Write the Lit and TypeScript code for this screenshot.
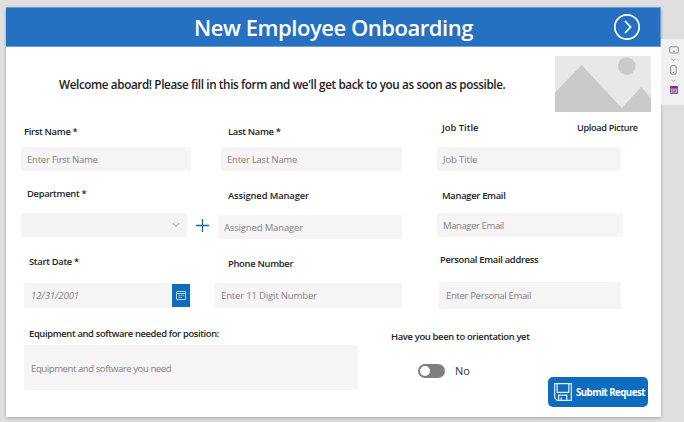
import { LitElement, html, css, svg } from "lit";
import { customElement, property } from "lit/decorators.js";

@customElement("form-field")
class FormField extends LitElement {
  @property() label = "";
  @property() placeholder = "";
  @property() kind = "text";

  static styles = css`
    :host { display: flex; flex-direction: column; align-items: flex-start; }
    .label {
      height: 14px; line-height: 14px; white-space: nowrap;
      font-size: 9.4px; font-weight: 600; color: #242424;
      letter-spacing: var(--label-track, -0.3px);
      margin-left: var(--label-x, 8px);
    }
    .row { display: flex; align-items: center; margin-top: var(--gap, 8px); }
    .box {
      box-sizing: border-box; display: flex; align-items: center; justify-content: space-between;
      width: var(--w, 184px); height: var(--h, 24px);
      padding: 0 7px 0 var(--pad, 6px);
      border-radius: var(--radius, 2px);
      background: #f6f4f5; color: #848282;
      font-size: 9.6px; line-height: 14px; white-space: nowrap;
      letter-spacing: var(--track, -0.27px);
    }
    .box > span { padding-top: var(--drop, 1px); }
    .date { padding-right: 1px; font-style: italic; border-radius: 0; }
    .select { background: #f4f4f4; }
    .button { display: flex; align-items: center; justify-content: center; width: 18px; height: 23px; background: #0f6cbd; }
    .plus { margin-left: 8px; }
    svg { display: block; fill: none; }
  `;

  render() {
    return html`
      <div class="label">${this.label}</div>
      <div class="row">
        <div class="box ${this.kind}">
          <span>${this.placeholder}</span>
          ${this.kind === "select"
            ? html`<svg width="8" height="6" viewBox="0 0 8 6" stroke="#8a8a8a" stroke-width="0.9"><path d="M.7 1 4 4.4 7.3 1" /></svg>`
            : ""}
          ${this.kind === "date"
            ? html`<div class="button">
                <svg width="10" height="9" viewBox="0 0 10 9" stroke="#c4dbf0" stroke-width="0.9">
                  <path d="M.5.5h9v8h-9zM.5 2.5h9" />
                  <path d="M2.5 4.3h1.2M4.6 4.3h1.2M6.7 4.3h1.2M2.5 6.4h1.2M4.6 6.4h1.2" stroke-width="1.1" />
                </svg>
              </div>`
            : ""}
        </div>
        ${this.kind === "select"
          ? html`<svg class="plus" width="15" height="15" viewBox="0 0 15 15" stroke="#1f649c" stroke-width="1.3"><path d="M7.5 1v13M1 7.5h13" /></svg>`
          : ""}
      </div>
    `;
  }
}

const photo = svg`
  <rect width="96" height="56" fill="#e8e8e8" />
  <circle cx="71.8" cy="10" r="8.8" fill="#cacac9" />
  <path d="M0 36.5 26.6 9 66.8 52 86.3 31 96 42.5V56H0z" fill="#cacac9" />
`;

@customElement("app-root")
class AppRoot extends LitElement {
  static styles = css`
    :host {
      display: flex; align-items: flex-start; box-sizing: border-box;
      width: 684px; height: 422px; padding: 7px 0 0 6px; overflow: hidden;
      background: #dfdfdf;
      font-family: "Open Sans", "Noto Sans", sans-serif;
    }
    svg { display: block; fill: none; flex: none; }
    .card {
      flex: none; width: 655px; height: 410px; background: #fff;
      box-shadow: 0 1px 3px rgba(0, 0, 0, 0.28);
      display: flex; flex-direction: column;
    }
    header {
      box-sizing: border-box; height: 40px; flex: none; background: #2670c2;
      border: 1px solid #6f9fd4; border-left-width: 0;
      display: flex; align-items: center; justify-content: space-between;
      padding: 0 19px 0 188px; color: #fff;
    }
    .title { font-size: 22px; line-height: 38px; font-weight: 600; white-space: nowrap; letter-spacing: -0.46px; padding-bottom: 1px; }
    .intro { display: flex; flex: none; height: 66px; padding: 9px 10px 0 53px; box-sizing: border-box; justify-content: space-between; }
    .welcome { margin-top: 19px; line-height: 18px; font-size: 11.7px; font-weight: 600; color: #222; white-space: nowrap; letter-spacing: -0.38px; }
    .columns { display: flex; flex: none; height: 209px; }
    .first { width: 208px; padding: 12px 0 0 15px; box-sizing: border-box; }
    .second { width: 216px; padding: 12px 0 0; box-sizing: border-box; }
    .third { flex: 1; padding: 8px 0 0; }
    .side-by-side { display: flex; }
    .upload { width: 0; margin-left: -44px; line-height: 14px; font-size: 9.1px; font-weight: 600; color: #242424; white-space: nowrap; letter-spacing: -0.3px; }

    .first-name { --w: 170px; --label-x: 3px; }
    .department { margin-top: 16px; --w: 166px; --label-x: 6px; --gap: 12px; }
    .start-date { margin: 18px 0 0 3px; --w: 167px; --h: 25px; --label-x: 5px; --gap: 14px; --pad: 7px; --drop: 0; --track: -0.1px; }
    .last-name { margin-left: 7px; --w: 181px; --label-x: 7px; }
    .manager { margin: 18px 0 0 4px; --w: 184px; --label-x: 10px; --gap: 12px; --track: -0.2px; --label-track: -0.12px; }
    .phone { margin: 18px 0 0 1px; --w: 187px; --h: 25px; --label-x: 13px; --gap: 12px; --track: -0.2px; }
    .job { margin-left: 7px; --label-x: 5px; --gap: 12px; --track: -0.15px; --label-track: 0; }
    .manager-email { margin: 18px 0 0 7px; --w: 186px; --label-x: 5px; --gap: 10px; --track: -0.45px; }
    .personal-email { margin: 16px 0 0 9px; --w: 182px; --h: 27px; --label-x: 1px; --gap: 15px; --radius: 0; --pad: 7px; --track: -0.37px; --drop: 0; }

    .bottom { display: flex; flex: 1; padding-left: 18px; }
    .equipment { width: 334px; padding-top: 5px; --w: 334px; --h: 45px; --label-x: 5px; --gap: 4px; --pad: 7px; --track: -0.45px; --label-track: -0.35px; --drop: 2px; }
    .orientation { margin-left: 33px; padding-top: 8px; width: 151px; }
    .question { line-height: 14px; font-size: 9.4px; font-weight: 600; color: #242424; white-space: nowrap; letter-spacing: -0.32px; }
    .answer { display: flex; align-items: center; gap: 10px; margin: 19px 0 0 27px; font-size: 11px; line-height: 15px; color: #333; }
    .toggle { box-sizing: border-box; width: 27px; height: 14px; border-radius: 7px; background: #7f7f82; padding: 2px; }
    .knob { width: 10px; height: 10px; border-radius: 50%; background: #fff; }
    .submit {
      display: flex; align-items: center; box-sizing: border-box; width: 100px; height: 30px; flex: none;
      margin-top: 55px; margin-left: 6px; padding-left: 6px; gap: 4px; border-radius: 5px;
      background: #0f6cbd; color: #fff; font-size: 9.7px; font-weight: 700; white-space: nowrap;
      letter-spacing: -0.54px;
    }
    .rail {
      box-sizing: border-box; flex: 1; height: 66px; margin-top: 32px; padding-top: 7px; background: #f0f0f0;
      display: flex; flex-direction: column; align-items: center;
    }
    .rail svg { margin-left: 2px; }
    .rail .chev { margin: 4px 0 3px 2px; }
  `;

  private chevron() {
    return html`<svg class="chev" width="5" height="4" viewBox="0 0 5 4" stroke="#999" stroke-width="0.9"><path d="M.5.8 2.5 2.8 4.5.8" /></svg>`;
  }

  render() {
    return html`
      <div class="card">
        <header>
          <div class="title">New Employee Onboarding</div>
          <svg width="28" height="28" viewBox="0 0 28 28" stroke="#fff" stroke-width="1.7">
            <circle cx="14" cy="14" r="12.2" /><path d="m12 8 5.6 6L12 20" />
          </svg>
        </header>
        <div class="intro">
          <div class="welcome">Welcome aboard! Please fill in this form and we'll get back to you as soon as possible.</div>
          <svg width="96" height="56" viewBox="0 0 96 56">${photo}</svg>
        </div>
        <div class="columns">
          <div class="first">
            <form-field class="first-name" label="First Name *" placeholder="Enter First Name"></form-field>
            <form-field class="department" kind="select" label="Department *"></form-field>
            <form-field class="start-date" kind="date" label="Start Date *" placeholder="12/31/2001"></form-field>
          </div>
          <div class="second">
            <form-field class="last-name" label="Last Name *" placeholder="Enter Last Name"></form-field>
            <form-field class="manager" label="Assigned Manager" placeholder="Assigned Manager"></form-field>
            <form-field class="phone" label="Phone Number" placeholder="Enter 11 Digit Number"></form-field>
          </div>
          <div class="third">
            <div class="side-by-side">
              <form-field class="job" label="Job Title" placeholder="Job Title"></form-field>
              <div class="upload">Upload Picture</div>
            </div>
            <form-field class="manager-email" label="Manager Email" placeholder="Manager Email"></form-field>
            <form-field class="personal-email" label="Personal Email address" placeholder="Enter Personal Email"></form-field>
          </div>
        </div>
        <div class="bottom">
          <form-field class="equipment" label="Equipment and software needed for position:" placeholder="Equipment and software you need"></form-field>
          <div class="orientation">
            <div class="question">Have you been to orientation yet</div>
            <div class="answer"><div class="toggle"><div class="knob"></div></div><span>No</span></div>
          </div>
          <div class="submit">
            <svg width="18" height="18" viewBox="0 0 18 18" stroke="#e4effa" stroke-width="1.2">
              <path d="M.7.7h16.6v16.6H3.2L.7 14.8zM3.2.7v8.6h11.6V.7M4.6 17.3v-5.1h8.2v5.1M7.2 14.5v2.8" />
            </svg>
            <span>Submit Request</span>
          </div>
        </div>
      </div>
      <div class="rail">
        <svg width="10" height="8" viewBox="0 0 10 8" stroke="#8a8a8a"><rect x=".6" y=".8" width="8.8" height="6.2" rx="1.2" /><path d="M4 5.3h2" /></svg>
        ${this.chevron()}
        <svg width="7" height="10" viewBox="0 0 7 10" stroke="#8a8a8a"><rect x=".7" y=".7" width="5.4" height="8.4" rx="1.2" /><path d="M2.6 7.4h1.6" /></svg>
        ${this.chevron()}
        <svg width="8" height="8" viewBox="0 0 8 8"><rect width="8" height="8" rx="1.4" fill="#c69bc8" /><path d="M0 2.4V1.2Q0 0 1.2 0h5.6Q8 0 8 1.2v1.2z" fill="#7c2f83" /><path d="M.5 2v5.5h7V2M2 4.2h1.2M4.8 4.2H6M2 5.9h4" stroke="#8e4495" stroke-width=".8" /></svg>
      </div>
    `;
  }
}
